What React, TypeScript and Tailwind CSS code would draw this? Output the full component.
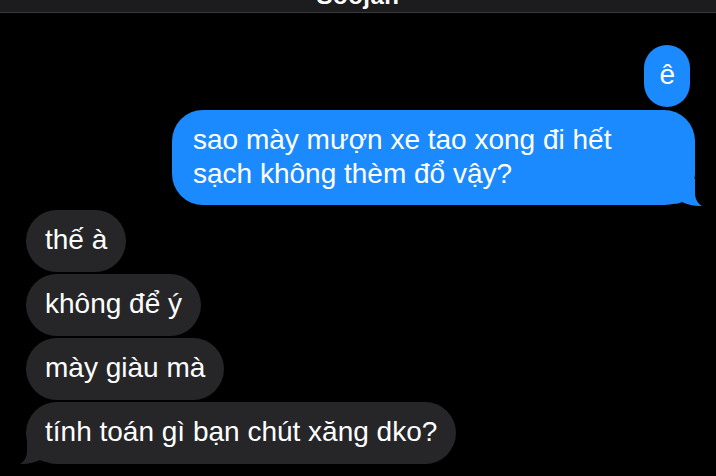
import React from "react";

const font = { fontFamily: '"Liberation Sans", Arial, sans-serif' };

function BlueTail() {
  return (
    <svg
      className="absolute right-[-9px] bottom-[-2px]"
      width="32"
      height="28"
      viewBox="0 0 32 28"
    >
      <path
        d="M23 0 L23 14 C23 20 26 25 30 27 C24 27.5 16 26 10 23 C8 24 5 25 0 25 L0 0 Z"
        fill="#1c8aff"
      />
    </svg>
  );
}

function GrayTail() {
  return (
    <svg
      className="absolute left-[-8px] bottom-[-1px] -scale-x-100"
      width="32"
      height="28"
      viewBox="0 0 32 28"
    >
      <path
        d="M23 0 L23 14 C23 20 26 25 30 27 C24 27.5 16 26 10 23 C8 24 5 25 0 25 L0 0 Z"
        fill="#262628"
      />
    </svg>
  );
}

function Gray({ children, tail }: { children: React.ReactNode; tail?: boolean }) {
  return (
    <div className="relative self-start rounded-[31px] bg-[#262628] px-[19px] pt-[13px] pb-[15px] text-[28px] leading-[34px] text-white whitespace-nowrap">
      {tail && <GrayTail />}
      <span className="relative">{children}</span>
    </div>
  );
}

export default function App() {
  return (
    <div className="w-[716px] h-[476px] bg-black overflow-hidden" style={font}>
      <div className="h-[13px] bg-[#1c1c1e] border-b border-[#3a3a3c] overflow-hidden flex justify-center">
        <div className="-mt-[16px] text-[24px] leading-[24px] font-semibold tracking-[0.5px] text-white">
          Soojan
        </div>
      </div>
      <div className="flex flex-col pt-[32px]">
        <div className="flex flex-col items-end gap-[3px] pr-[21px]">
          <div className="mr-[5px] rounded-[31px] bg-[#1c8aff] px-[15px] pt-[13px] pb-[15px] text-[28px] leading-[34px] text-white">
            ê
          </div>
          <div className="relative w-[523px] rounded-[31px] bg-[#1c8aff] pl-[21px] pr-[18px] pt-[13px] pb-[14px] text-[28px] leading-[34px] text-white">
            <BlueTail />
            <span className="relative">
              sao mày mượn xe tao xong đi hết
              <br />
              sạch không thèm đổ vậy?
            </span>
          </div>
        </div>
        <div className="mt-[5px] flex flex-col gap-[2px] pl-[26px]">
          <Gray>thế à</Gray>
          <Gray>không để ý</Gray>
          <Gray>mày giàu mà</Gray>
          <Gray tail>tính toán gì bạn chút xăng dko?</Gray>
        </div>
      </div>
    </div>
  );
}
